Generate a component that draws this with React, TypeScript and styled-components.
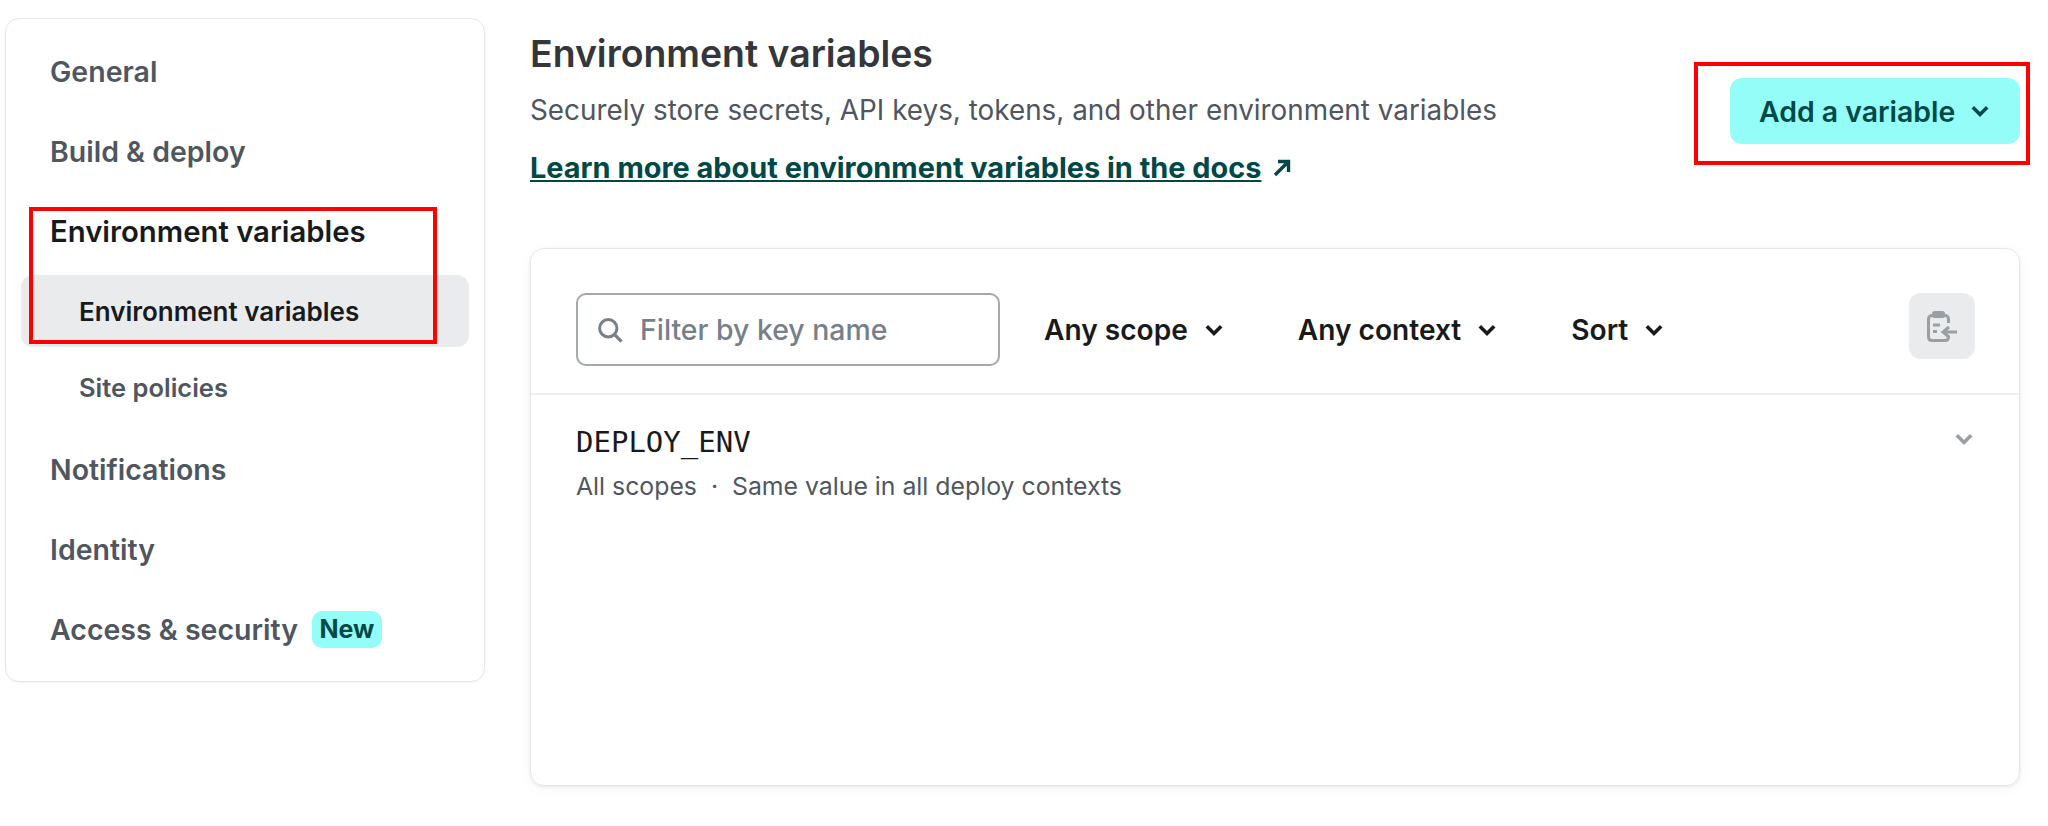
import styled, { createGlobalStyle } from "styled-components";

const GlobalStyle = createGlobalStyle`
	html, body {
		margin: 0;
		padding: 0;
		background: #fff;
		font-family: Inter, "Liberation Sans", sans-serif;
	}
	* {
		box-sizing: border-box;
	}
`;

function Chevron({ color = "currentColor" }: { color?: string }) {
	return (
		<svg width={24} height={24} viewBox="0 0 16 16" fill="none">
			<path d="M3.2 5.5L8 10.3L12.8 5.5" stroke={color} strokeWidth="2.4" />
		</svg>
	);
}

function Dropdown({ label }: { label: string }) {
	return (
		<FilterButton>
			{label}
			<Chevron />
		</FilterButton>
	);
}

export default function App() {
	return (
		<Page>
			<GlobalStyle />
			<Sidebar>
				<NavItem>General</NavItem>
				<NavItem>Build &amp; deploy</NavItem>
				<NavItem $active>Environment variables</NavItem>
				<SubItem $active>Environment variables</SubItem>
				<SubItem>Site policies</SubItem>
				<NavItem>Notifications</NavItem>
				<NavItem>Identity</NavItem>
				<NavItem>
					Access &amp; security
					<Badge>New</Badge>
				</NavItem>
				<Highlight $left={23} $top={188} $width={408} $height={137} />
			</Sidebar>
			<Main>
				<Header>
					<div>
						<Title>Environment variables</Title>
						<Description>Securely store secrets, API keys, tokens, and other environment variables</Description>
						<DocsLink>
							<a href="#docs">Learn more about environment variables in the docs</a>
							<svg width="24" height="24" viewBox="0 0 24 24" fill="none">
								<path d="M5 19L18 6M8 5.5H18.5V16" stroke="#014847" strokeWidth="3.4" />
							</svg>
						</DocsLink>
					</div>
					<AddButton>
						Add a variable
						<Chevron color="#014847" />
					</AddButton>
				</Header>
				<Card>
					<Toolbar>
						<SearchBox>
							<svg width="30" height="30" viewBox="0 0 26 26" fill="none">
								<circle cx="11.5" cy="11.5" r="7.5" stroke="#778089" strokeWidth="2.6" />
								<path d="M17 17L23 23" stroke="#778089" strokeWidth="2.8" />
							</svg>
							Filter by key name
						</SearchBox>
						<Dropdown label="Any scope" />
						<Dropdown label="Any context" />
						<Dropdown label="Sort" />
						<ImportButton>
							<svg width="30" height="31" viewBox="0 0 30 31" fill="none">
								<path d="M17 4.5H18C20 4.5 21.5 6 21.5 8V12M21.5 25V25.5C21.5 28 20 29.5 18 29.5H5C3 29.5 1.5 28 1.5 25.5V8C1.5 6 3 4.5 5 4.5H6" stroke="#9a9fa4" strokeWidth="3" />
								<rect x="5" y="0" width="13" height="7" rx="2.5" fill="#9a9fa4" />
								<path d="M6 14H13M6 20.5H10" stroke="#9a9fa4" strokeWidth="3" />
								<path d="M30 21H18M22 16L16 21L22 26" stroke="#9a9fa4" strokeWidth="3" />
							</svg>
						</ImportButton>
					</Toolbar>
					<VariableRow>
						<div>
							<VariableKey>DEPLOY_ENV</VariableKey>
							<VariableMeta>All scopes &nbsp;·&nbsp; Same value in all deploy contexts</VariableMeta>
						</div>
						<RowToggle>
							<Chevron color="#9a9fa4" />
						</RowToggle>
					</VariableRow>
				</Card>
				<Highlight $left={1164} $top={44} $width={336} $height={103} />
			</Main>
		</Page>
	);
}

const Page = styled.div`
	display: flex;
	align-items: flex-start;
	width: 2048px;
	height: 826px;
	padding: 18px 28px 0 5px;
	overflow: hidden;
`;

const Sidebar = styled.nav`
	position: relative;
	flex: none;
	width: 480px;
	height: 664px;
	padding: 12px 15px 0;
	border: 1px solid #e4e6e8;
	border-radius: 14px;
	box-shadow: 0 1px 2px rgba(0, 0, 0, 0.05);
`;

const NavItem = styled.div<{ $active?: boolean }>`
	display: flex;
	align-items: center;
	height: 80px;
	margin-bottom: ${(p) => (p.$active ? "4px" : "0")};
	padding-left: 29px;
	font-size: ${(p) => (p.$active ? "29.3px" : "28.5px")};
	font-weight: 600;
	color: ${(p) => (p.$active ? "#181a1c" : "#4f5660")};
`;

const SubItem = styled.div<{ $active?: boolean }>`
	display: flex;
	align-items: center;
	height: ${(p) => (p.$active ? "72px" : "80px")};
	margin-bottom: ${(p) => (p.$active ? "0" : "2px")};
	padding-left: 58px;
	border-radius: 12px;
	font-size: ${(p) => (p.$active ? "26px" : "25.5px")};
	font-weight: 600;
	color: ${(p) => (p.$active ? "#181a1c" : "#4f5660")};
	background: ${(p) => (p.$active ? "#e9ebed" : "transparent")};
`;

const Badge = styled.span`
	margin-left: 14px;
	padding: 0 7.5px;
	border-radius: 10px;
	font-size: 25px;
	font-weight: 700;
	line-height: 37px;
	color: #014847;
	background: #94fdf7;
`;

const Highlight = styled.div<{ $left: number; $top: number; $width: number; $height: number }>`
	position: absolute;
	left: ${(p) => p.$left}px;
	top: ${(p) => p.$top}px;
	width: ${(p) => p.$width}px;
	height: ${(p) => p.$height}px;
	border: 4px solid #ff0000;
`;

const Main = styled.main`
	position: relative;
	flex: 1;
	margin-left: 45px;
`;

const Header = styled.header`
	display: flex;
	align-items: flex-start;
	justify-content: space-between;
	height: 230px;
`;

const Title = styled.h1`
	margin: 13px 0 0;
	font-size: 37.4px;
	line-height: 46px;
	font-weight: 600;
	color: #33373c;
`;

const Description = styled.p`
	margin: 15px 0 0;
	font-size: 27.85px;
	line-height: 36px;
	color: #4f5660;
`;

const DocsLink = styled.div`
	display: flex;
	align-items: center;
	gap: 9px;
	margin-top: 22px;

	a {
		font-size: 28.9px;
		line-height: 36px;
		font-weight: 700;
		color: #014847;
	}
`;

const AddButton = styled.button`
	display: flex;
	align-items: center;
	gap: 13px;
	width: 290px;
	height: 66px;
	margin-top: 60px;
	padding: 0 0 0 29px;
	border: none;
	border-radius: 12px;
	font: 600 28.4px Inter, sans-serif;
	color: #014847;
	background: #94fdf7;
`;

const Card = styled.section`
	height: 538px;
	border: 1px solid #e4e6e8;
	border-radius: 14px;
	box-shadow: 0 1px 3px rgba(0, 0, 0, 0.08), 0 3px 14px rgba(0, 0, 0, 0.04);
`;

const Toolbar = styled.div`
	display: flex;
	align-items: center;
	height: 146px;
	padding: 17px 44px 0 45px;
	border-bottom: 2px solid #eceef0;
`;

const SearchBox = styled.div`
	display: flex;
	align-items: center;
	gap: 15px;
	width: 424px;
	height: 73px;
	margin-right: 44px;
	padding-left: 17px;
	border: 2px solid #a3a9ae;
	border-radius: 10px;
	font-size: 28.4px;
	font-weight: 500;
	color: #778089;
`;

const FilterButton = styled.div`
	display: flex;
	align-items: center;
	gap: 14px;
	margin-right: 72px;
	font-size: 28.1px;
	font-weight: 600;
	color: #181a1c;
`;

const ImportButton = styled.div`
	display: flex;
	align-items: center;
	justify-content: center;
	width: 66px;
	height: 66px;
	margin-left: auto;
	margin-bottom: 7px;
	border-radius: 12px;
	background: #e9ebed;
`;

const VariableRow = styled.div`
	display: flex;
	align-items: flex-start;
	justify-content: space-between;
	padding: 25px 43px 25px 45px;
`;

const RowToggle = styled.div`
	margin-top: 7px;
`;

const VariableKey = styled.div`
	font-family: "DejaVu Sans Mono", "Liberation Mono", monospace;
	font-size: 29px;
	line-height: 44px;
	color: #181a1c;
`;

const VariableMeta = styled.div`
	margin-top: 6px;
	font-size: 24.8px;
	line-height: 32px;
	color: #4f5660;
`;
